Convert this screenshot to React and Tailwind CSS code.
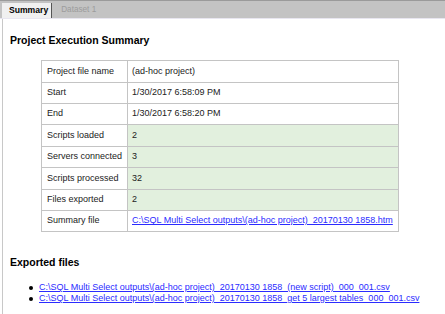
import React from 'react'

const ROWS = [
  { label: 'Project file name', value: '(ad-hoc project)', green: false, h: 'h-[22px]' },
  { label: 'Start', value: '1/30/2017 6:58:09 PM', green: false, h: 'h-[21px]' },
  { label: 'End', value: '1/30/2017 6:58:20 PM', green: false, h: 'h-[21px]' },
  { label: 'Scripts loaded', value: '2', green: true, h: 'h-[22px]' },
  { label: 'Servers connected', value: '3', green: true, h: 'h-[21px]' },
  { label: 'Scripts processed', value: '32', green: true, h: 'h-[22px]' },
  { label: 'Files exported', value: '2', green: true, h: 'h-[21px]' },
]

const FILES = [
  'C:\\SQL Multi Select outputs\\(ad-hoc project)_20170130 1858_(new script)_000_001.csv',
  'C:\\SQL Multi Select outputs\\(ad-hoc project)_20170130 1858_get 5 largest tables_000_001.csv',
]

export default function App() {
  return (
    <div className="w-[445px] h-[314px] overflow-hidden bg-white font-['Liberation_Sans',Arial,sans-serif] text-[9px] text-[#222]">
      {/* tab strip */}
      <div className="h-[19px] bg-[#c3c3c3] border-t border-[#9a9a9a] border-b border-b-[#e8e6f0] flex items-end pl-[2px]">
        <div className="h-[15px] pl-[7px] pr-[3px] bg-[#f0f0f0] border-r border-[#555] flex items-center font-bold text-black text-[8.6px]">
          Summary
        </div>
        <div className="h-[15px] pl-[9px] flex items-center text-[#9c9c9c] text-[8.2px]">Dataset 1</div>
      </div>

      <div className="ml-[2px] border-l border-[#c8c8c8] h-full pl-[7px]">
        <h1 className="pt-[14px] text-[10.5px] font-bold text-black leading-[14px]">Project Execution Summary</h1>

        <table className="mt-[13px] ml-[31px] w-[358px] table-fixed border-collapse border border-[#a0a0a0] whitespace-nowrap">
          <tbody>
            {ROWS.map((r) => (
              <tr key={r.label} className={r.h}>
                <td className="w-[86px] border border-[#c4c4c4] pl-[5px] bg-white">{r.label}</td>
                <td className={`border border-[#c4c4c4] pl-[4px] ${r.green ? 'bg-[#e2f0de]' : 'bg-white'}`}>{r.value}</td>
              </tr>
            ))}
            <tr className="h-[21px]">
              <td className="w-[86px] border border-[#c4c4c4] pl-[5px] bg-white">Summary file</td>
              <td className="border border-[#c4c4c4] pl-[4px] bg-white">
                <a className="text-[#2b2bff] underline">C:\SQL Multi Select outputs\(ad-hoc project)_20170130 1858.htm</a>
              </td>
            </tr>
          </tbody>
        </table>

        <h2 className="mt-[23px] text-[10.5px] font-bold text-black leading-[14px]">Exported files</h2>
        <ul className="mt-[13px] leading-[11px] whitespace-nowrap">
          {FILES.map((f) => (
            <li key={f} className="flex items-center pl-[19px] gap-[6px]">
              <span className="w-[4px] h-[4px] rounded-full bg-black shrink-0" />
              <a className="text-[#2b2bff] underline">{f}</a>
            </li>
          ))}
        </ul>
      </div>
    </div>
  )
}
